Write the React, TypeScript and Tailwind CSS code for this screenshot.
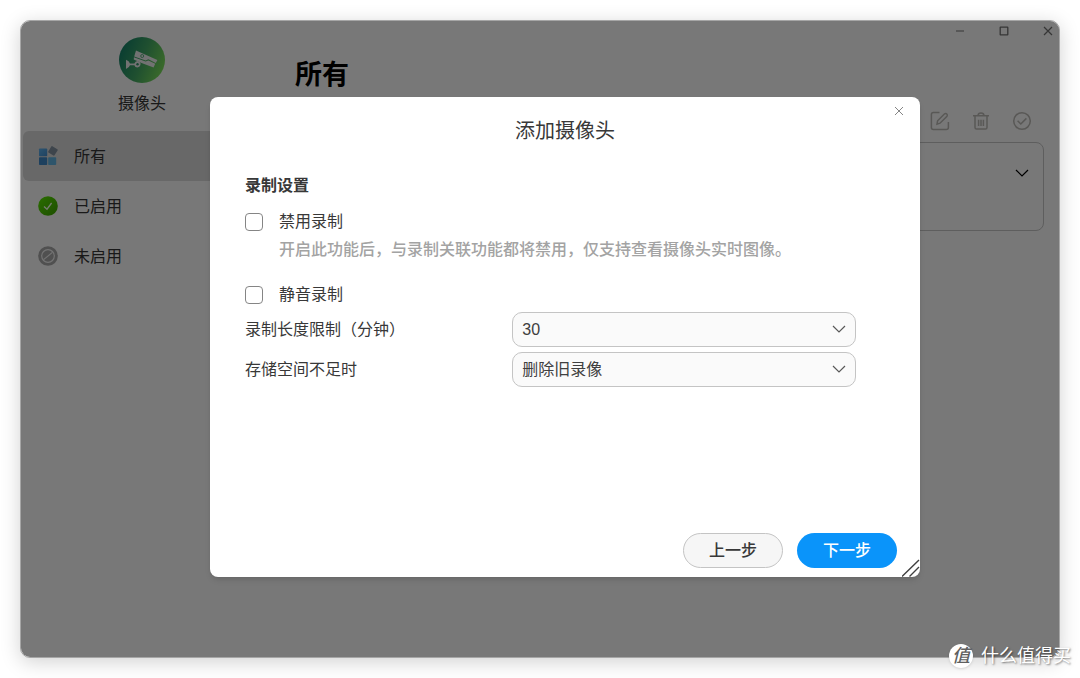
import { useState } from "react";

const navItems = [
  { id: "all", label: "所有" },
  { id: "enabled", label: "已启用" },
  { id: "disabled", label: "未启用" },
];

function CameraLogo() {
  return (
    <svg viewBox="0 0 46 46" className="size-[46px]" aria-hidden="true">
      <defs>
        <linearGradient id="logo" x1="0" y1="0.3" x2="1" y2="0.7">
          <stop offset="0" stopColor="#127a64" />
          <stop offset="0.5" stopColor="#3fa060" />
          <stop offset="1" stopColor="#78d854" />
        </linearGradient>
      </defs>
      <circle cx="23" cy="23" r="23" fill="url(#logo)" />
      <g fill="#e4e4e4">
        <path d="M17 13.6 38.4 23 36.8 26 29.4 22.2 26.6 23.4 15.2 19.4Z" />
        <path d="M14.900 20.300 26.600 24.400 29.400 23.400 36.200 26.800 34.600 30.400 22.500 26 14.800 22.400Z" />
        <path d="M7 22.800Q10.200 24.200 11 26.400H15.400Q16.200 24.200 18.400 24 21 24.200 21.600 26.400 21.600 30 18.400 30.400 16 30.400 15.400 28.200H11Q10.200 30.600 7 32Z" />
      </g>
      <circle cx="18.500" cy="27.300" r="1.200" fill="#2c8c62" />
      <circle cx="23.200" cy="19" r="1.500" fill="none" stroke="#3a9c62" strokeWidth="0.800" />
    </svg>
  );
}

function NavIcon({ id }: { id: string }) {
  if (id === "all") {
    return (
      <svg viewBox="0 0 20 20" className="size-5" aria-hidden="true">
        <defs>
          <linearGradient id="tile" x1="0" y1="0" x2="1" y2="1">
            <stop offset="0" stopColor="#5aa8e0" />
            <stop offset="1" stopColor="#3f86c4" />
          </linearGradient>
        </defs>
        <rect x="1" y="2.4" width="8.2" height="7.8" rx="0.8" fill="url(#tile)" />
        <rect x="1" y="11.2" width="8.2" height="7.8" rx="0.8" fill="#3a80bd" />
        <rect x="10.2" y="11.2" width="8" height="7.8" rx="0.8" fill="#5cabd6" />
        <rect x="11.2" y="1.2" width="7.4" height="7.4" rx="0.8" fill="#7d8b99" transform="rotate(32 14.9 4.9)" />
      </svg>
    );
  }
  if (id === "enabled") {
    return (
      <svg viewBox="0 0 20 20" className="size-5" aria-hidden="true">
        <defs>
          <linearGradient id="on" x1="0" y1="0" x2="1" y2="1">
            <stop offset="0" stopColor="#56dc00" />
            <stop offset="1" stopColor="#3a9c00" />
          </linearGradient>
        </defs>
        <circle cx="10" cy="10" r="9.8" fill="url(#on)" />
        <path d="m6 10.4 3 2.8 4.600-6.200" fill="none" stroke="#e8f5df" strokeWidth="1.300" />
      </svg>
    );
  }
  return (
    <svg viewBox="0 0 20 20" className="size-5" aria-hidden="true">
      <circle cx="10" cy="10" r="9.8" fill="#a0a0a0" />
      <g fill="none" stroke="#e6e6e6" strokeWidth="1.200">
        <circle cx="10" cy="10" r="6.3" />
        <path d="m5.600 13.600 8.800-7.200" />
      </g>
    </svg>
  );
}

function Chevron({ className }: { className: string }) {
  return (
    <svg viewBox="0 0 14 14" fill="none" stroke="currentColor" strokeWidth="1.2" className={className} aria-hidden="true">
      <path d="m1 4 6 6 6-6" />
    </svg>
  );
}

function Sidebar() {
  return (
    <aside className="flex w-[242px] shrink-0 flex-col bg-[#f0f0f0] pt-4">
      <div className="flex flex-col items-center gap-[9px]">
        <CameraLogo />
        <span className="leading-6">摄像头</span>
      </div>
      <nav className="mt-[15px] flex flex-col px-0.5">
        {navItems.map((item) => (
          <a
            key={item.id}
            href={`#${item.id}`}
            className={
              item.id === "all"
                ? "flex h-[50px] items-center gap-4 rounded-md bg-[#d0d0d0] pl-[15px]"
                : "flex h-[50px] items-center gap-4 pl-[15px]"
            }
          >
            <NavIcon id={item.id} />
            <span className="pt-0.5">{item.label}</span>
          </a>
        ))}
      </nav>
    </aside>
  );
}

function WindowControls() {
  return (
    <div className="flex h-5 justify-end gap-6 pr-px text-[#6c6c6c]">
      <button aria-label="最小化" className="flex w-5 items-center justify-center">
        <svg viewBox="0 0 10 10" className="size-2.5" fill="none" stroke="currentColor" strokeWidth="1.2">
          <path d="M1 5h8" />
        </svg>
      </button>
      <button aria-label="最大化" className="flex w-5 items-center justify-center">
        <svg viewBox="0 0 10 10" className="size-2.5" fill="none" stroke="currentColor" strokeWidth="1.3">
          <rect x="1.2" y="1.2" width="7.6" height="7.6" rx="0.4" />
        </svg>
      </button>
      <button aria-label="关闭窗口" className="flex w-5 items-center justify-center">
        <svg viewBox="0 0 10 10" className="size-2.5" fill="none" stroke="currentColor" strokeWidth="1.2">
          <path d="m1 1 8 8M9 1 1 9" />
        </svg>
      </button>
    </div>
  );
}

function Toolbar() {
  return (
    <div className="mt-4 flex justify-end gap-[21px] pr-3 text-[#b2b0ac]">
      <button aria-label="编辑">
        <svg viewBox="0 0 20 20" className="size-5" fill="none" stroke="currentColor" strokeWidth="1.500">
          <path d="M9.500 1.600H3.400Q1.400 1.600 1.400 3.600V16.400Q1.400 18.400 3.400 18.400H16.200Q18.400 18.400 18.400 16.400V11" />
          <path d="M7 13.200 7.600 9.800 14.600 2.800Q15.800 2 16.800 3 17.800 4 17 5.200L10 12.200Z" />
        </svg>
      </button>
      <button aria-label="删除">
        <svg viewBox="0 0 20 20" className="size-5" fill="none" stroke="currentColor" strokeWidth="1.500">
          <path d="M2 4.800H18M7 4.500Q7.200 2 10 2 12.800 2 13 4.500M4 5V16.400Q4 18 5.600 18H14.400Q16 18 16 16.400V5" />
          <path d="M7.600 8.800V15M10 8.800V15M12.400 8.800V15" />
        </svg>
      </button>
      <button aria-label="启用">
        <svg viewBox="0 0 20 20" className="size-5" fill="none" stroke="currentColor" strokeWidth="1.500">
          <circle cx="10" cy="10" r="8.300" />
          <path d="m5.600 9.800 3.200 3.200 5.600-5.600" />
        </svg>
      </button>
    </div>
  );
}

function AddCameraDialog() {
  const [noRecord, setNoRecord] = useState(false);
  const [mute, setMute] = useState(false);
  const [length, setLength] = useState("30");
  const [policy, setPolicy] = useState("delete");

  const checkboxClass =
    "size-[18px] shrink-0 appearance-none rounded-sm border border-[#858585] bg-white checked:border-[#0a94fa] checked:bg-[#0a94fa]";
  const selectClass =
    "h-[35px] w-full appearance-none rounded-[10px] border border-[#c4c4c4] bg-[#fafafa] px-[9px] text-[#404040]";
  const chevronClass =
    "pointer-events-none absolute top-2.5 right-2.5 size-3.5 text-[#585858]";

  return (
    <div
      role="dialog"
      aria-labelledby="dialog-title"
      className="relative flex min-h-[480px] w-full max-w-[710px] flex-col rounded-lg bg-white text-[#383838] shadow-md"
    >
      <button aria-label="关闭" className="absolute top-1 right-[11px] flex size-5 items-center justify-center text-[#858585]">
        <svg viewBox="0 0 10 10" className="size-2.5" fill="none" stroke="currentColor">
          <path d="m1 1 8 8M9 1 1 9" />
        </svg>
      </button>

      <h2 id="dialog-title" className="pt-5 text-center text-[20px] leading-7">
        添加摄像头
      </h2>

      <form className="flex flex-col pt-[29px] pr-16 pl-[35px]">
        <h3 className="leading-6 font-bold">录制设置</h3>

        <div className="mt-3 flex items-center gap-4">
          <input id="no-record" type="checkbox" className={checkboxClass} checked={noRecord} onChange={(e) => setNoRecord(e.target.checked)} />
          <label htmlFor="no-record" className="leading-6">
            禁用录制
          </label>
        </div>
        <p className="mt-1 pl-[34px] leading-6 font-medium text-[#a3a3a3]">
          开启此功能后，与录制关联功能都将禁用，仅支持查看摄像头实时图像。
        </p>

        <div className="mt-[21px] flex items-center gap-4">
          <input id="mute" type="checkbox" className={checkboxClass} checked={mute} onChange={(e) => setMute(e.target.checked)} />
          <label htmlFor="mute" className="leading-6">
            静音录制
          </label>
        </div>

        <div className="mt-[5px] grid grid-cols-[7fr_9fr] items-center gap-y-[5px]">
          <label htmlFor="length">录制长度限制（分钟）</label>
          <div className="relative">
            <select id="length" className={selectClass} value={length} onChange={(e) => setLength(e.target.value)}>
              <option value="10">10</option>
              <option value="30">30</option>
              <option value="60">60</option>
            </select>
            <Chevron className={chevronClass} />
          </div>
          <label htmlFor="policy">存储空间不足时</label>
          <div className="relative">
            <select id="policy" className={selectClass} value={policy} onChange={(e) => setPolicy(e.target.value)}>
              <option value="delete">删除旧录像</option>
              <option value="stop">停止录制</option>
            </select>
            <Chevron className={chevronClass} />
          </div>
        </div>
      </form>

      <div className="mt-auto flex justify-end gap-3.5 pr-[23px] pb-[9px] font-medium">
        <button className="h-[35px] w-[100px] rounded-full border border-[#c4c4c4] bg-[#f6f6f6]">上一步</button>
        <button className="h-[35px] w-[100px] rounded-full bg-[#0a94fa] text-white">下一步</button>
      </div>

      <svg viewBox="0 0 18 18" className="absolute right-0 bottom-0 size-[18px]" fill="none" stroke="#404040" strokeWidth="1.400" aria-hidden="true">
        <path d="M0 17.500 17 1M7.500 17.500 17 8" />
      </svg>
    </div>
  );
}

export default function App() {
  return (
    <div className="relative flex min-h-screen bg-white p-5 font-['Liberation_Sans','Noto_Sans_CJK_SC',sans-serif] text-base text-[#333333]">
      <div className="relative flex flex-1 overflow-hidden rounded-[10px] border border-[#a6a6a6] bg-[#f0f0f0] shadow-[0_4px_20px_rgba(0,0,0,0.18)]">
        <Sidebar />
        <main className="flex flex-1 flex-col">
          <WindowControls />
          <div className="pt-3.5 pr-[15px] pl-8">
            <h1 className="text-[27px] leading-10 font-bold text-black">所有</h1>
            <Toolbar />
            <section className="mt-[11px] flex h-[89px] justify-end rounded-lg border border-[#bcbcbc] pt-[23px] pr-3.5">
              <button aria-label="展开" className="size-3.5 text-black">
                <Chevron className="size-3.5" />
              </button>
            </section>
          </div>
        </main>

        {/* Modal backdrop */}
        <div className="absolute inset-0 flex items-start justify-center bg-black/50 pt-[76px] pl-[50px]">
          <AddCameraDialog />
        </div>
      </div>

      {/* Watermark */}
      <div className="absolute right-[9px] bottom-2.5 flex items-center gap-2 text-white [text-shadow:1px_1px_2px_rgba(0,0,0,0.5)]">
        <span className="flex size-6 items-center justify-center rounded-full bg-white text-[18px] leading-6 font-medium text-[#606060] italic shadow [text-shadow:none]">
          值
        </span>
        <span className="text-[18px] leading-6">什么值得买</span>
      </div>
    </div>
  );
}
